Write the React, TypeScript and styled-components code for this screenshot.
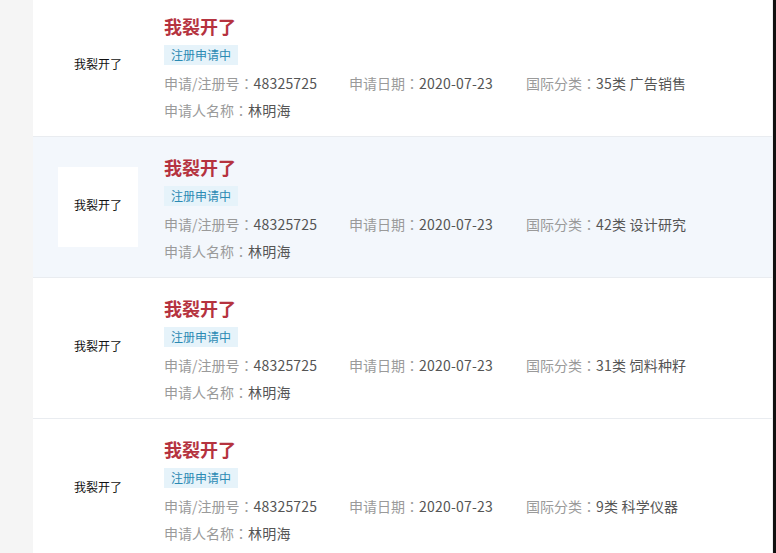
import React from 'react';
import styled, { createGlobalStyle } from 'styled-components';

const GlobalStyle = createGlobalStyle`
  html, body {
    margin: 0;
    padding: 0;
    overflow: hidden;
    background: #f5f5f5;
    font-family: "Noto Sans CJK SC", "Noto Sans", sans-serif;
  }
`;

const Page = styled.div`
  display: flex;
  height: 553px;
`;

const Gutter = styled.div`
  width: 33px;
  flex-shrink: 0;
  background: #f5f5f5;
`;

const Panel = styled.div`
  flex: 1;
  background: #fff;
  border-right: 1px solid #eceef1;
  overflow: hidden;
`;

const EdgeBar = styled.div`
  width: 3px;
  flex-shrink: 0;
  background: #111;
`;

const List = styled.div`
  margin-top: -4px;
`;

const Row = styled.div<{ $active?: boolean }>`
  display: flex;
  align-items: flex-start;
  height: 140px;
  box-sizing: content-box;
  padding-left: 25px;
  border-bottom: 1px solid #e9ecf0;
  background: ${(p) => (p.$active ? '#f3f7fc' : '#fff')};
`;

const Thumb = styled.div`
  width: 80px;
  height: 74px;
  padding-bottom: 6px;
  margin-top: 30px;
  margin-right: 26px;
  flex-shrink: 0;
  background: #fff;
  display: flex;
  align-items: center;
  justify-content: center;
  font-size: 12px;
  color: #111;
`;

const Info = styled.div`
  padding-top: 18px;
  display: flex;
  flex-direction: column;
  align-items: flex-start;
`;

const Title = styled.div`
  font-size: 18px;
  font-weight: 700;
  line-height: 24px;
  color: #b5333f;
`;

const Tag = styled.span`
  margin-top: 7px;
  height: 20px;
  line-height: 20px;
  padding: 0 7px;
  font-size: 12px;
  color: #2b8ab3;
  background: #e6f3fa;
`;

const Line = styled.div<{ $gap: number }>`
  margin-top: ${(p) => p.$gap}px;
  display: grid;
  grid-template-columns: 185px 177px auto;
  font-size: 14px;
  line-height: 22px;
  white-space: nowrap;
`;

const Field = styled.span`
  color: #9a9a9a;
`;

const Colon = styled.span`
  font-family: "Noto Sans CJK TC", sans-serif;
`;

const Value = styled.span`
  color: #555;
  letter-spacing: 0.2px;
`;

type Item = { cls: string; active?: boolean };

const items: Item[] = [
  { cls: '35类 广告销售' },
  { cls: '42类 设计研究', active: true },
  { cls: '31类 饲料种籽' },
  { cls: '9类 科学仪器' },
];

export default function App() {
  return (
    <>
      <GlobalStyle />
      <Page>
        <Gutter />
        <Panel>
          <List>
            {items.map((it, i) => (
              <Row key={i} $active={it.active}>
                <Thumb>我裂开了</Thumb>
                <Info>
                  <Title>我裂开了</Title>
                  <Tag>注册申请中</Tag>
                  <Line $gap={7}>
                    <Field>
                      申请/注册号<Colon>：</Colon>
                      <Value>48325725</Value>
                    </Field>
                    <Field>
                      申请日期<Colon>：</Colon>
                      <Value>2020-07-23</Value>
                    </Field>
                    <Field>
                      国际分类<Colon>：</Colon>
                      <Value>{it.cls}</Value>
                    </Field>
                  </Line>
                  <Line $gap={5}>
                    <Field>
                      申请人名称<Colon>：</Colon>
                      <Value>林明海</Value>
                    </Field>
                  </Line>
                </Info>
              </Row>
            ))}
          </List>
        </Panel>
        <EdgeBar />
      </Page>
    </>
  );
}
